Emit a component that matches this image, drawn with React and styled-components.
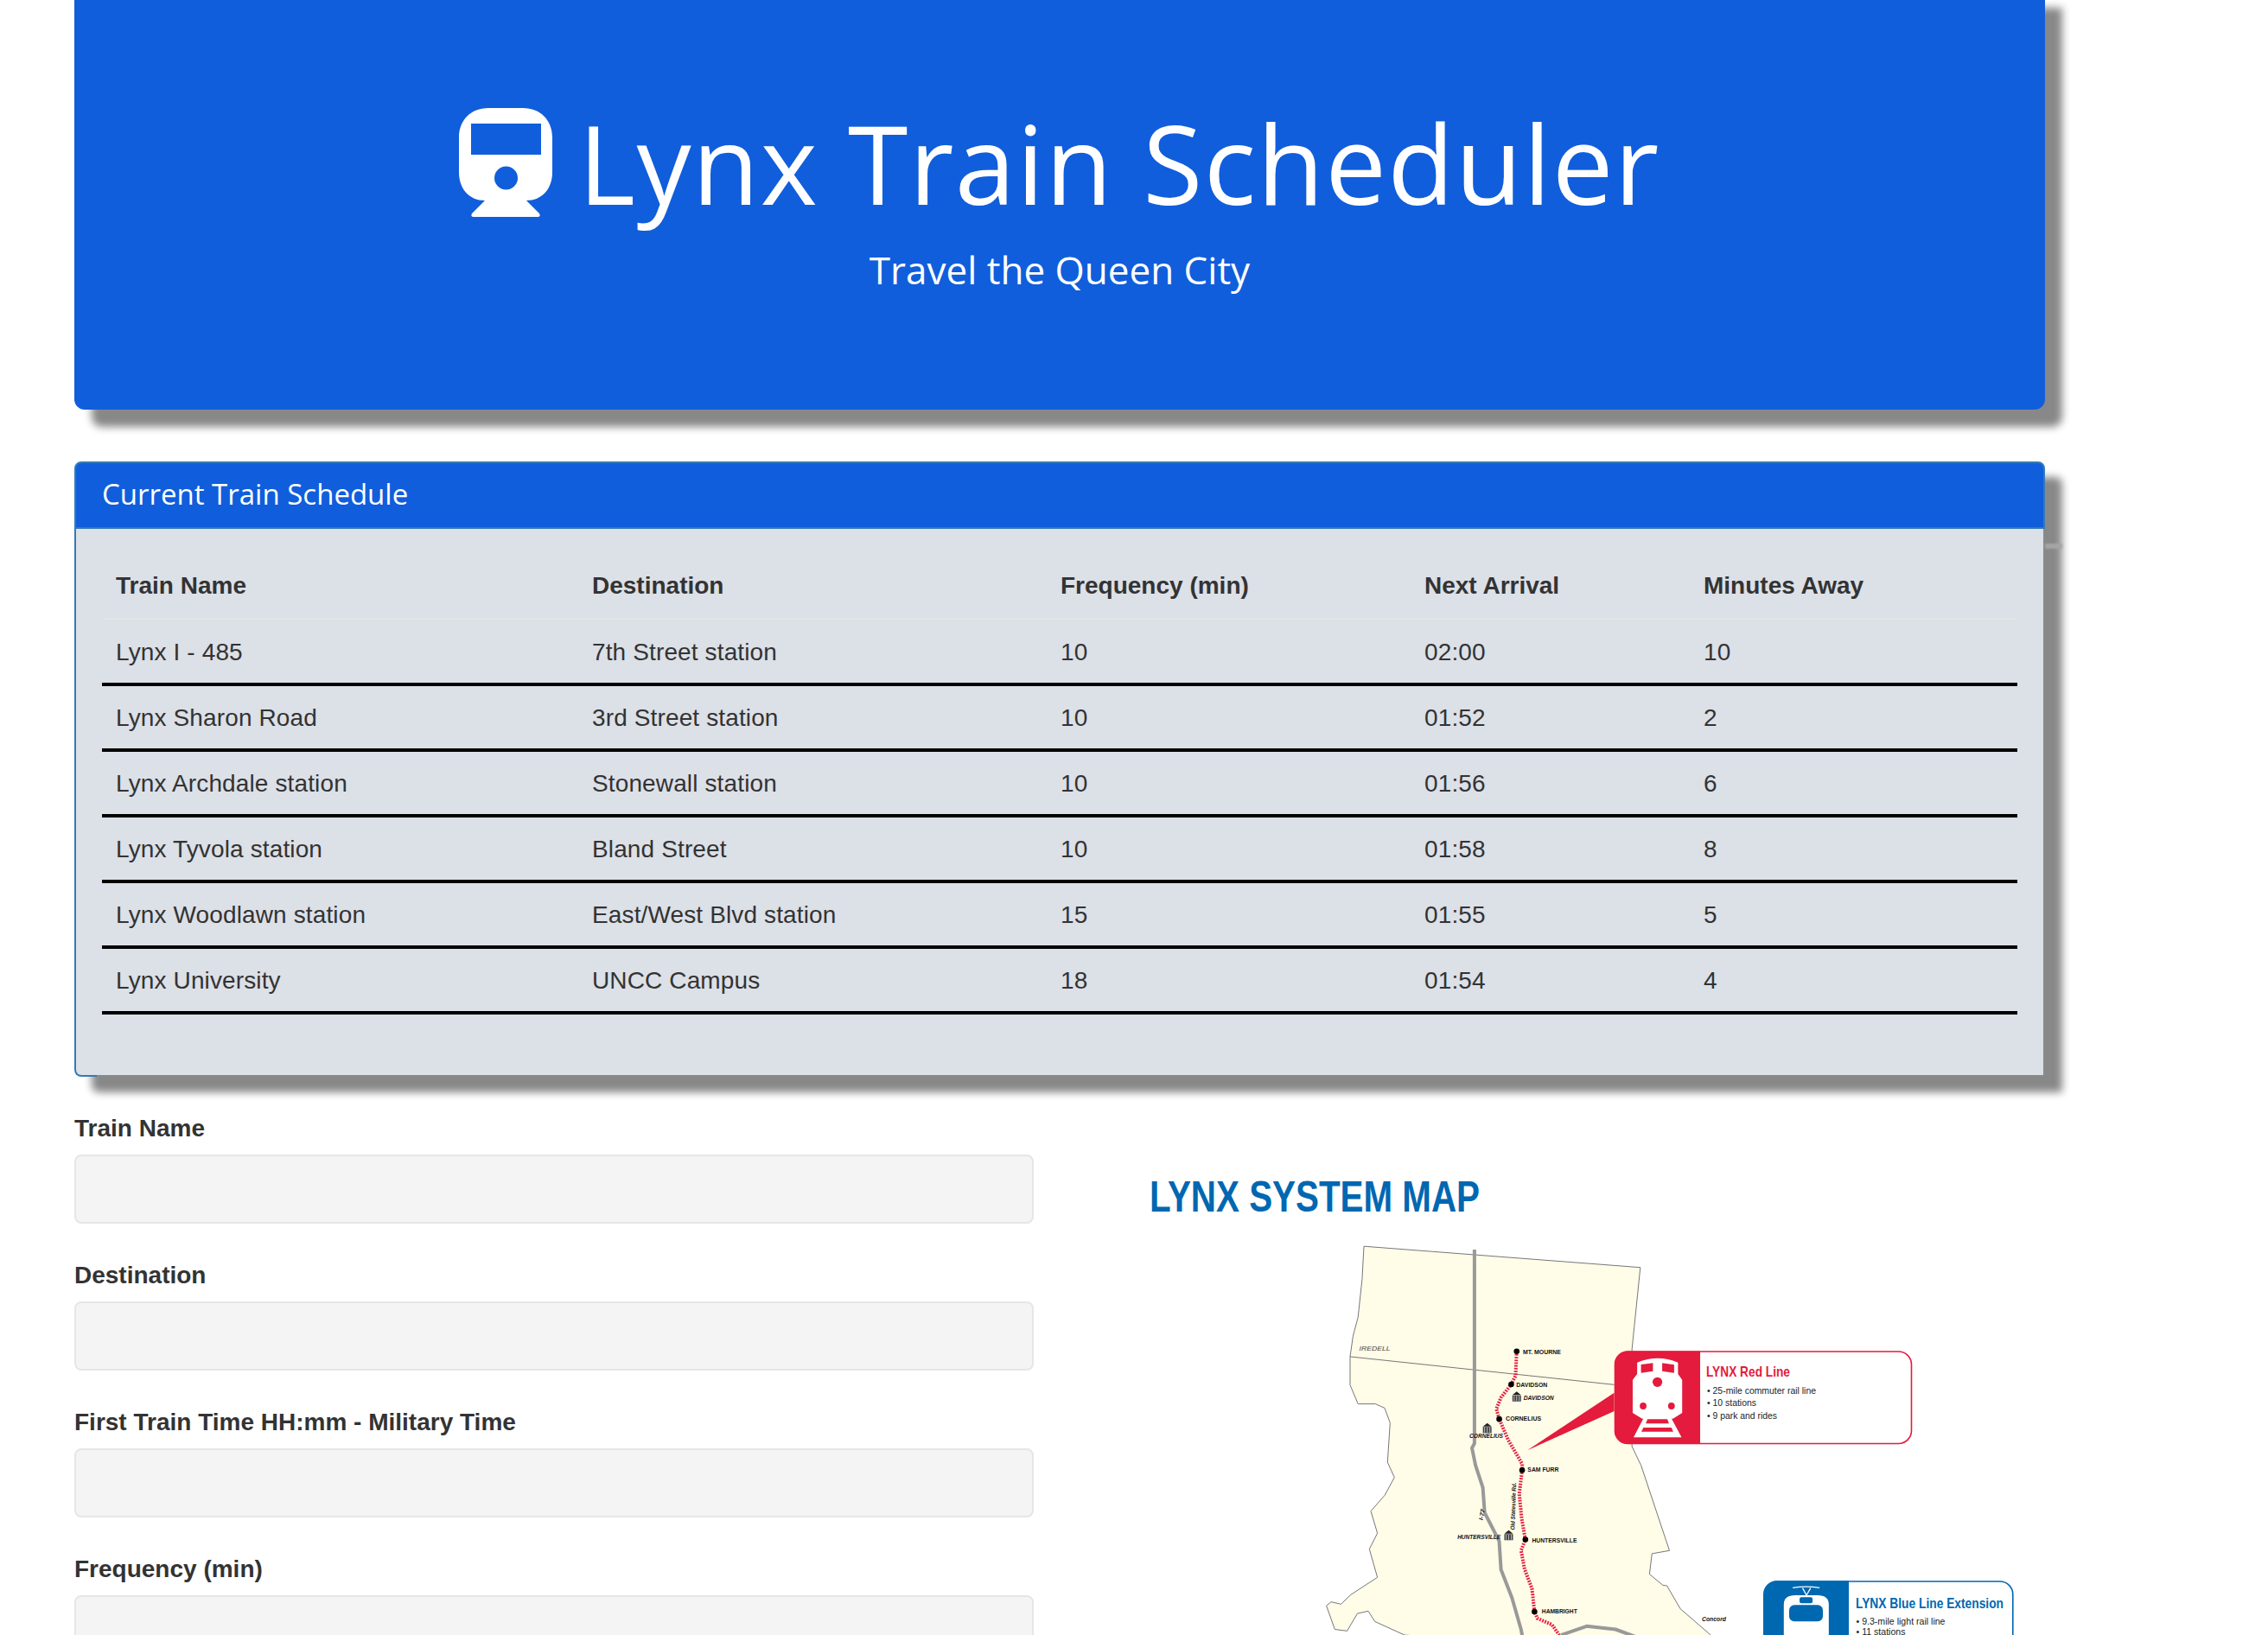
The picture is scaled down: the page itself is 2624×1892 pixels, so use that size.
import React from 'react';
import styled, { createGlobalStyle } from 'styled-components';

const Global = createGlobalStyle`
  html, body { margin: 0; padding: 0; background: #fff; overflow: hidden; }
  body { font-family: "Liberation Sans", Arial, sans-serif; font-size: 28px; color: #333; }
`;
const Page = styled.div`
  width: 2624px; height: 1892px; overflow: hidden; box-sizing: border-box;
  padding: 0 258px 0 86px;
`;
const Jumbotron = styled.header`
  height: 485px; margin-top: -11px; box-sizing: border-box; padding-top: 125px;
  background: #105edc; color: #fff; border-radius: 0 0 12px 12px;
  box-shadow: 20px 20px 10px #888; text-align: center;
`;
const Title = styled.h1`
  margin: 0; height: 148px; display: flex; align-items: center; justify-content: center; gap: 30px;
  font: 400 126px/148px "Open Sans", "Lato", sans-serif; letter-spacing: 1.4px;
`;
const TrainIcon = styled.svg` width: 108px; height: 126px; flex: none; `;
const Subtitle = styled.p`
  margin: 22px 0 0; font: 500 44px/56px "Open Sans", "Lato", sans-serif;
`;
const Panel = styled.section`
  position: relative; margin-top: 60px; border-radius: 8px 8px 0 8px;
  box-shadow: 20px 18px 10px #888;
  &::after {
    content: ""; position: absolute; right: -20px; top: 95px; width: 20px; height: 6px;
    background: #a5a5a5; filter: blur(1px);
  }
`;
const PanelHeading = styled.h3`
  margin: 0; height: 78px; box-sizing: border-box; padding: 0 30px 3px;
  display: flex; align-items: center;
  background: #105edc; color: #fff; border: 2px solid #337ab7; border-radius: 8px 8px 0 0;
  font: 500 33px/40px "Open Sans", "Lato", sans-serif;
`;
const PanelBody = styled.div`
  position: relative; height: 634px; box-sizing: border-box; padding: 28px 30px 0 30px;
  background: #dce0e7;
  border-left: 2px solid #337ab7; border-right: 2px solid #8a8a8a; border-bottom: 2px solid #337ab7;
  border-radius: 0 0 0 8px;
  &::after {
    content: ""; position: absolute; left: 24px; right: -2px; bottom: -2px; height: 2px; background: #8a8a8a;
  }
`;
const Table = styled.table`
  width: 2216px; border-collapse: collapse; table-layout: fixed;
`;
const Th = styled.th`
  width: ${p => p.$w}px; height: 76px; box-sizing: border-box; padding: 0 16px; text-align: left;
  font-weight: 700; border-bottom: 2px solid #e4e4e4; vertical-align: middle;
`;
const Td = styled.td`
  height: 76px; box-sizing: border-box; padding: 2px 16px 0; border-bottom: 4px solid #000;
  letter-spacing: .13px;
`;
const Columns = styled.div` display: flex; `;
const Form = styled.form` width: 1110px; flex: none; padding-top: 40px; `;
const Field = styled.div` margin-bottom: 40px; `;
const Label = styled.label`
  display: block; font-weight: 700; line-height: 40px; margin-bottom: 10px;
`;
const Input = styled.input`
  display: block; width: 100%; height: 80px; box-sizing: border-box; background: #f4f4f4;
  border: 2px solid #e6e6e6; border-radius: 8px;
`;
const MapFigure = styled.figure`
  margin: 74px 0 0 84px;
`;
const MapSvg = styled.svg` display: block; `;

const columns = [['Train Name', 551], ['Destination', 542], ['Frequency (min)', 421], ['Next Arrival', 323], ['Minutes Away', 379]];
const rows = [
  ['Lynx I - 485', '7th Street station', '10', '02:00', '10'],
  ['Lynx Sharon Road', '3rd Street station', '10', '01:52', '2'],
  ['Lynx Archdale station', 'Stonewall station', '10', '01:56', '6'],
  ['Lynx Tyvola station', 'Bland Street', '10', '01:58', '8'],
  ['Lynx Woodlawn station', 'East/West Blvd station', '15', '01:55', '5'],
  ['Lynx University', 'UNCC Campus', '18', '01:54', '4'],
];
const fields = ['Train Name', 'Destination', 'First Train Time HH:mm - Military Time', 'Frequency (min)'];

// The map was traced from the reference in two differently scaled crops.
const a = (x, y) => [1280 + x / 2.376, 1320 + y / 2.741];
const b = (x, y) => [1820 + x / 2.9, 1540 + y / 3];
const pts = (conv, list) => list.map(([x, y]) => conv(x, y).map(n => n.toFixed(1)).join(',')).join(' ');

const county = [[708,335],[1468,402],[1445,660],[1440,800],[1445,970],[1470,1030],[1548,1300],[1500,1310],[1493,1375],[1530,1410]];
const countyB = [[315,885],[360,965],[455,1050],[520,1120]];
const countyWest = [[820,1568],[738,1525],[720,1492],[690,1500],[662,1555],[628,1550],[605,1475],[618,1463],[645,1470],[672,1440],[745,1385],[723,1295],[745,1245],[727,1175],[765,1125],[792,1068],[773,1020],[780,895],[765,848],[740,835],[692,835],[670,775],[670,685],[678,620],[692,560],[703,440]];
const outline = [...county.map(([x, y]) => a(x, y)), ...countyB.map(([x, y]) => b(x, y)), ...countyWest.map(([x, y]) => a(x, y))]
  .map(p => p.map(n => n.toFixed(1)).join(',')).join(' ');
const highway = [[1012,345],[1012,960],[1005,975],[1015,1030],[1035,1100],[1040,1180],[1080,1270],[1085,1360],[1115,1450],[1140,1550],[1145,1580]];
const beltway = [[1250,1568],[1320,1540],[1400,1550],[1470,1580]];
const redLine = [[1128,668],[1125,745],[1113,773],[1085,815],[1072,850],[1080,883],[1105,950],[1143,1025],[1143,1045],[1135,1120],[1142,1200],[1152,1265],[1140,1300],[1150,1360],[1170,1420],[1177,1494],[1185,1515],[1225,1535],[1245,1568]];
const stations = [[1128,668],[1113,773],[1080,883],[1143,1045],[1152,1265],[1177,1494]];
const stopLabels = [['MT. MOURNE',1145,676,44],['DAVIDSON',1127,782,36],['CORNELIUS',1098,889,41],['SAM FURR',1158,1051,36],['HUNTERSVILLE',1170,1275,52],['HAMBRIGHT',1197,1500,41]];
const townLabels = [['IREDELL',695,667,36,'#444'],['DAVIDSON',1147,822,35,'#111'],['CORNELIUS',998,944,39,'#111'],['HUNTERSVILLE',965,1264,50,'#111']];
const halls = [[1128,812],[1047,912],[1106,1252]];
const redItems = [['25-mile commuter rail line',1612.6,126],['10 stations',1627,57],['9 park and rides',1641.6,81]];

const MapText = styled.text`
  font-family: "Liberation Sans", Arial, sans-serif; font-size: ${p => p.$size}px;
  font-weight: ${p => p.$bold ? 700 : 400}; font-style: ${p => p.$italic ? 'italic' : 'normal'};
  fill: ${p => p.$fill};
`;
const Fit = ({ x, y, w, size, fill = '#111', bold, italic, children, ...rest }) => (
  <MapText x={x} y={y} textLength={w} lengthAdjust="spacingAndGlyphs" $size={size} $fill={fill} $bold={bold} $italic={italic} {...rest}>{children}</MapText>
);
const Hall = ({ at }) => {
  const [x, y] = a(at[0], at[1]);
  return (
    <g fill="#222">
      <polygon points={`${x - 5},${y - 2} ${x},${y - 6} ${x + 5},${y - 2}`} />
      <rect x={x - 5} y={y - 1.5} width="10" height="7" fill="#444" />
      <path d={`M${x - 3} ${y - 1}v6M${x} ${y - 1}v6M${x + 3} ${y - 1}v6`} stroke="#eee" strokeWidth=".7" />
    </g>
  );
};

const SystemMap = () => {
  const tip = a(1157, 982), p1 = a(1396, 800), p2 = a(1396, 858);
  const [c1x, c1y] = a(670, 685), [c2x, c2y] = b(138, 187);
  const [osX, osY] = a(1122, 1235), [i77X, i77Y] = a(1035, 1205);
  return (
    <MapSvg viewBox="1280 1320 1100 572" width="1100" height="572">
      <Fit x={1330} y={1402} w={382} size={50} fill="#0067b1" bold>LYNX SYSTEM MAP</Fit>
      <polygon points={outline} fill="#fffce8" stroke="#777" strokeWidth="1" />
      <line x1={c1x} y1={c1y} x2={c2x} y2={c2y} stroke="#777" strokeWidth="1" />
      <polyline points={pts(a, highway)} fill="none" stroke="#999" strokeWidth="4" strokeLinejoin="round" />
      <polyline points={pts(a, beltway)} fill="none" stroke="#999" strokeWidth="4" strokeLinejoin="round" />
      <polyline points={pts(a, redLine)} fill="none" stroke="#e41b3c" strokeWidth="4" strokeDasharray="1.8 1.4" />
      {stations.map(([x, y]) => { const [cx, cy] = a(x, y); return <circle key={y} cx={cx} cy={cy} r="3.3" fill="#000" />; })}
      {halls.map(h => <Hall key={h[0]} at={h} />)}
      {stopLabels.map(([t, x, y, w]) => { const [px, py] = a(x, y); return <Fit key={t} x={px} y={py} w={w} size={7} bold>{t}</Fit>; })}
      {townLabels.map(([t, x, y, w, f]) => { const [px, py] = a(x, y); return <Fit key={t + x} x={px} y={py} w={w} size={7} fill={f} italic bold={f !== '#444'}>{t}</Fit>; })}
      <Fit x={0} y={0} w={55} size={6.8} bold italic transform={`translate(${osX} ${osY}) rotate(-88)`}>Old Statesville Rd.</Fit>
      <Fit x={0} y={0} w={13} size={6.8} bold italic transform={`translate(${i77X} ${i77Y}) rotate(-80)`}>I-77</Fit>
      <Fit x={1969} y={1876} w={28} size={7} bold italic>Concord</Fit>

      <polygon points={`${tip} ${p1} ${p2}`} fill="#e41b3c" />
      <rect x="1868.5" y="1564" width="343" height="106.5" rx="15" fill="#fff" stroke="#e41b3c" strokeWidth="1.6" />
      <path d="M1967 1563.5H1883a15 15 0 0 0 -15 15V1656a15 15 0 0 0 15 15H1967Z" fill="#e41b3c" />
      <path d={`M${b(215,150)} L${b(215,110)} Q${b(285,80)} ${b(352,110)} L${b(352,150)} L${b(366,170)} L${b(366,285)} L${b(335,305)} L${b(232,305)} L${b(200,285)} L${b(200,170)} Z`} fill="#fff" />
      <polygon points={pts(b, [[228,117],[268,112],[268,140],[228,146]])} fill="#e41b3c" />
      <polygon points={pts(b, [[299,112],[339,118],[339,146],[299,140]])} fill="#e41b3c" />
      <circle cx={b(283,178)[0]} cy={b(283,178)[1]} r="5.6" fill="#e41b3c" />
      <circle cx={b(235,261)[0]} cy={b(235,261)[1]} r="3.9" fill="#e41b3c" />
      <circle cx={b(330,261)[0]} cy={b(330,261)[1]} r="3.9" fill="#e41b3c" />
      <polygon points={pts(b, [[238,300],[328,300],[364,370],[203,370]])} fill="#fff" />
      <polygon points={pts(b, [[250,307],[316,307],[322,322],[244,322]])} fill="#e41b3c" />
      <polygon points={pts(b, [[236,336],[330,336],[336,350],[229,350]])} fill="#e41b3c" />
      <Fit x={1974} y={1593} w={97} size={17} fill="#e41b3c" bold>LYNX Red Line</Fit>
      {redItems.map(([t, y, w]) => <Fit key={t} x={1975} y={y} w={w} size={11} fill="#222">{`• ${t}`}</Fit>)}

      <rect x="2040.8" y="1830" width="288" height="120" rx="15" fill="#fff" stroke="#0067b1" strokeWidth="1.6" />
      <path d="M2139 1829.2H2056a15 15 0 0 0 -15 15V1900H2139Z" fill="#0067b1" />
      <path d={`M${b(737,892)} Q${b(782,885)} ${b(827,892)} M${b(770,893)} L${b(783,918)} L${b(797,893)}`} fill="none" stroke="#fff" strokeWidth="1.3" />
      <path d={`M${b(707,1060)} L${b(707,950)} Q${b(707,918)} ${b(745,918)} L${b(820,918)} Q${b(858,918)} ${b(858,950)} L${b(858,1060)} Z`} fill="#fff" />
      <rect x={b(760,0)[0]} y={b(0,925)[1]} width="15" height="7" rx="2" fill="#0067b1" />
      <rect x={b(725,0)[0]} y={b(0,952)[1]} width="39" height="19" rx="6" fill="#0067b1" />
      <Fit x={2147} y={1860.6} w={171} size={17} fill="#0067b1" bold>LYNX Blue Line Extension</Fit>
      <Fit x={2147.5} y={1880} w={103} size={11} fill="#222">• 9.3-mile light rail line</Fit>
      <Fit x={2147.5} y={1892} w={57} size={11} fill="#222">• 11 stations</Fit>
    </MapSvg>
  );
};

export default function App() {
  return (
    <Page>
      <Global />
      <Jumbotron>
        <Title>
          <TrainIcon viewBox="0 0 108 126">
            <path fillRule="evenodd" fill="#fff" d="M34 0H74C94 0 108 14 108 34V74C108 94 96 107 78 107L93 122Q95 126 91 126H17Q13 126 15 122L30 107C12 107 0 94 0 74V34C0 14 14 0 34 0ZM14 18V54H95V18ZM54.5 67.5A13.5 13.5 0 1 0 54.5 94.5A13.5 13.5 0 1 0 54.5 67.5Z" />
          </TrainIcon>
          Lynx Train Scheduler
        </Title>
        <Subtitle>Travel the Queen City</Subtitle>
      </Jumbotron>
      <Panel>
        <PanelHeading>Current Train Schedule</PanelHeading>
        <PanelBody>
          <Table>
            <thead>
              <tr>{columns.map(([t, w]) => <Th key={t} $w={w}>{t}</Th>)}</tr>
            </thead>
            <tbody>
              {rows.map(r => <tr key={r[0]}>{r.map((c, i) => <Td key={i}>{c}</Td>)}</tr>)}
            </tbody>
          </Table>
        </PanelBody>
      </Panel>
      <Columns>
        <Form>
          {fields.map(f => (
            <Field key={f}>
              <Label>{f}</Label>
              <Input />
            </Field>
          ))}
        </Form>
        <MapFigure><SystemMap /></MapFigure>
      </Columns>
    </Page>
  );
}
